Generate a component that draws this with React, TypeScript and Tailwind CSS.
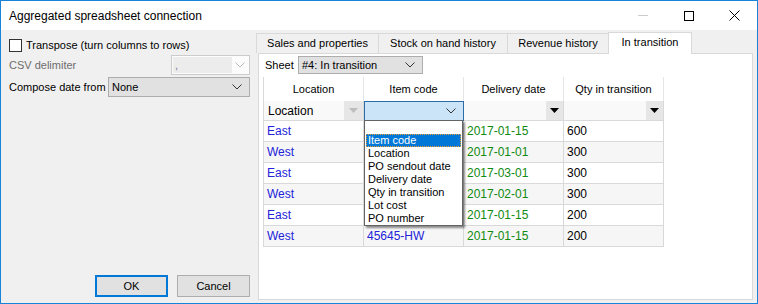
import React from 'react';

const rows = [
  { loc: 'East', code: '', date: '2017-01-15', qty: '600' },
  { loc: 'West', code: '', date: '2017-01-01', qty: '300' },
  { loc: 'East', code: '', date: '2017-03-01', qty: '300' },
  { loc: 'West', code: '', date: '2017-02-01', qty: '300' },
  { loc: 'East', code: '', date: '2017-01-15', qty: '200' },
  { loc: 'West', code: '45645-HW', date: '2017-01-15', qty: '200' },
];

const options = ['Item code', 'Location', 'PO sendout date', 'Delivery date', 'Qty in transition', 'Lot cost', 'PO number'];

const tabs = [
  { label: 'Sales and properties', w: 'w-[123px] border-l' },
  { label: 'Stock on hand history', w: 'w-[129px]' },
  { label: 'Revenue history', w: 'w-[101px]' },
];

const Chevron = ({ color = '#333' }: { color?: string }) => (
  <svg width="10" height="6" viewBox="0 0 10 6" className="shrink-0">
    <path d="M0.5 0.5 L5 5 L9.5 0.5" fill="none" stroke={color} strokeWidth="1" />
  </svg>
);

const Triangle = ({ color = '#000' }: { color?: string }) => (
  <svg width="9" height="5" viewBox="0 0 9 5">
    <path d="M0 0 H9 L4.5 5 Z" fill={color} />
  </svg>
);

const App = () => {
  return (
    <div
      className="w-[758px] h-[304px] border border-[#1883d7] flex flex-col text-[11px] text-black select-none whitespace-nowrap"
      style={{ fontFamily: '"Liberation Sans", Arial, sans-serif' }}
    >
      {/* Title bar */}
      <div className="h-[29px] bg-white flex items-center shrink-0">
        <span className="pl-[8px] text-[12px]">Aggregated spreadsheet connection</span>
        <div className="ml-auto flex items-center h-full">
          <div className="w-[46px] h-full flex items-center justify-center">
            <div className="w-[10px] h-px bg-[#cccccc]" />
          </div>
          <div className="w-[45px] h-full flex items-center justify-center">
            <div className="w-[10px] h-[10px] border border-black" />
          </div>
          <div className="w-[46px] h-full flex items-center justify-center">
            <svg width="11" height="11" viewBox="0 0 11 11">
              <path d="M0.5 0.5 L10.5 10.5 M10.5 0.5 L0.5 10.5" stroke="#000" strokeWidth="1" />
            </svg>
          </div>
        </div>
      </div>

      {/* Body */}
      <div className="flex-1 bg-[#f0f0f0] flex min-h-0">
        {/* Left options */}
        <div className="w-[255px] shrink-0 flex flex-col pl-[8px] pr-[6px] pt-[7px] pb-[6px]">
          <div className="h-[17px] flex items-center gap-[4px]">
            <div className="w-[13px] h-[13px] border border-[#333] bg-white" />
            <span>Transpose (turn columns to rows)</span>
          </div>
          <div className="mt-[1px] h-[20px] flex items-center">
            <span className="text-[#6d6d6d]">CSV delimiter</span>
            <div className="ml-auto w-[79px] h-[20px] border border-[#cccccc] bg-[#fcfcfc] flex items-center px-[1px]">
              <div className="w-[59px] h-[16px] bg-[#ececec] text-[#7a7a9a] pl-[2px] leading-[16px]">,</div>
              <div className="flex-1 flex justify-center">
                <Chevron color="#bcbcbc" />
              </div>
            </div>
          </div>
          <div className="mt-[2px] h-[20px] flex items-center">
            <span className="shrink-0">Compose date from</span>
            <div className="ml-auto w-[142px] h-[20px] border border-[#adadad] bg-[#e1e1e1] flex items-center pl-[3px] pr-[7px]">
              <span className="flex-1">None</span>
              <Chevron />
            </div>
          </div>
          <div className="mt-auto flex justify-end gap-[9px]">
            <button className="w-[73px] h-[22px] border-2 border-[#0078d7] bg-[#e1e1e1] text-[11px]">OK</button>
            <button className="w-[73px] h-[22px] border border-[#adadad] bg-[#e1e1e1] text-[11px]">Cancel</button>
          </div>
        </div>

        {/* Tab control */}
        <div className="flex-1 flex flex-col pt-[1px] pr-[4px] pb-[3px] min-w-0">
          <div className="flex items-end h-[22px] shrink-0">
            {tabs.map((t) => (
              <div
                key={t.label}
                className={`h-[20px] ${t.w} border-t border-r border-[#d9d9d9] bg-[#f0f0f0] flex items-center justify-center`}
              >
                {t.label}
              </div>
            ))}
            <div className="h-[22px] -mb-px w-[84px] -ml-px border border-b-0 border-[#d9d9d9] bg-white flex items-center justify-center pb-[2px] relative z-10">
              In transition
            </div>
          </div>
          <div className="flex-1 bg-white border border-[#d9d9d9] ml-[2px] flex flex-col pl-[4px] pt-[2px]">
            <div className="flex items-center h-[18px] pl-[2px]">
              <span className="w-[33px]">Sheet</span>
              <div className="w-[125px] h-[18px] border border-[#adadad] bg-[#e1e1e1] flex items-center pl-[3px] pr-[7px]">
                <span className="flex-1">#4: In transition</span>
                <Chevron />
              </div>
            </div>

            {/* Grid */}
            <div className="relative mt-[3px] w-[401px]">
              <div className="grid grid-cols-[100px_100px_100px_100px] border-l border-[#d9d9d9]">
                {['Location', 'Item code', 'Delivery date', 'Qty in transition'].map((h) => (
                  <div key={h} className="h-[24px] flex items-center justify-center border-r border-[#e5e5e5] bg-white">
                    {h}
                  </div>
                ))}

                {/* Filter row */}
                <div className="h-[20px] bg-[#f9f9f9] border-r border-b border-[#d9d9d9] flex items-center pl-[4px] text-[12px]">
                  <span className="flex-1">Location</span>
                  <div className="w-[19px] h-[19px] bg-[#e6e6e6] flex items-center justify-center">
                    <Triangle color="#bdbdbd" />
                  </div>
                </div>
                <div className="h-[20px] bg-[#cce4f7] border border-[#2a6ba8] flex items-center justify-end pr-[7px]">
                  <Chevron />
                </div>
                <div className="h-[20px] bg-[#f9f9f9] border-r border-b border-[#d9d9d9] flex items-center justify-end">
                  <div className="w-[17px] h-[19px] bg-[#e6e6e6] flex items-center justify-center">
                    <Triangle />
                  </div>
                </div>
                <div className="h-[20px] bg-[#f9f9f9] border-r border-b border-[#d9d9d9] flex items-center justify-end">
                  <div className="w-[17px] h-[19px] bg-[#e6e6e6] flex items-center justify-center">
                    <Triangle />
                  </div>
                </div>

                {rows.map((r, i) => {
                  const bg = i % 2 === 1 ? 'bg-[#f6f6f6]' : 'bg-white';
                  const cell = `h-[21px] ${bg} border-r border-b border-[#d9d9d9] flex items-center pl-[3px] text-[12px]`;
                  return (
                    <React.Fragment key={i}>
                      <div className={`${cell} text-[#2323d9]`}>{r.loc}</div>
                      <div className={`${cell} text-[#2323d9]`}>{r.code}</div>
                      <div className={`${cell} text-[#108a10]`}>{r.date}</div>
                      <div className={cell}>{r.qty}</div>
                    </React.Fragment>
                  );
                })}
              </div>

              {/* Open dropdown list */}
              <div className="absolute left-[101px] top-[43px] w-[99px] h-[106px] bg-white border border-[#646464] shadow-[2px_2px_2px_rgba(0,0,0,0.45)] flex flex-col pt-[13px] px-[1px]">
                {options.map((o, i) => (
                  <div
                    key={o}
                    className={`h-[13px] leading-[13px] pl-[2px] text-[11px] ${
                      i === 0 ? 'bg-[#0078d7] text-white outline-1 outline-dotted outline-[#f0a030] -outline-offset-1' : ''
                    }`}
                  >
                    {o}
                  </div>
                ))}
              </div>
            </div>
          </div>
        </div>
      </div>
    </div>
  );
};

export default App;
